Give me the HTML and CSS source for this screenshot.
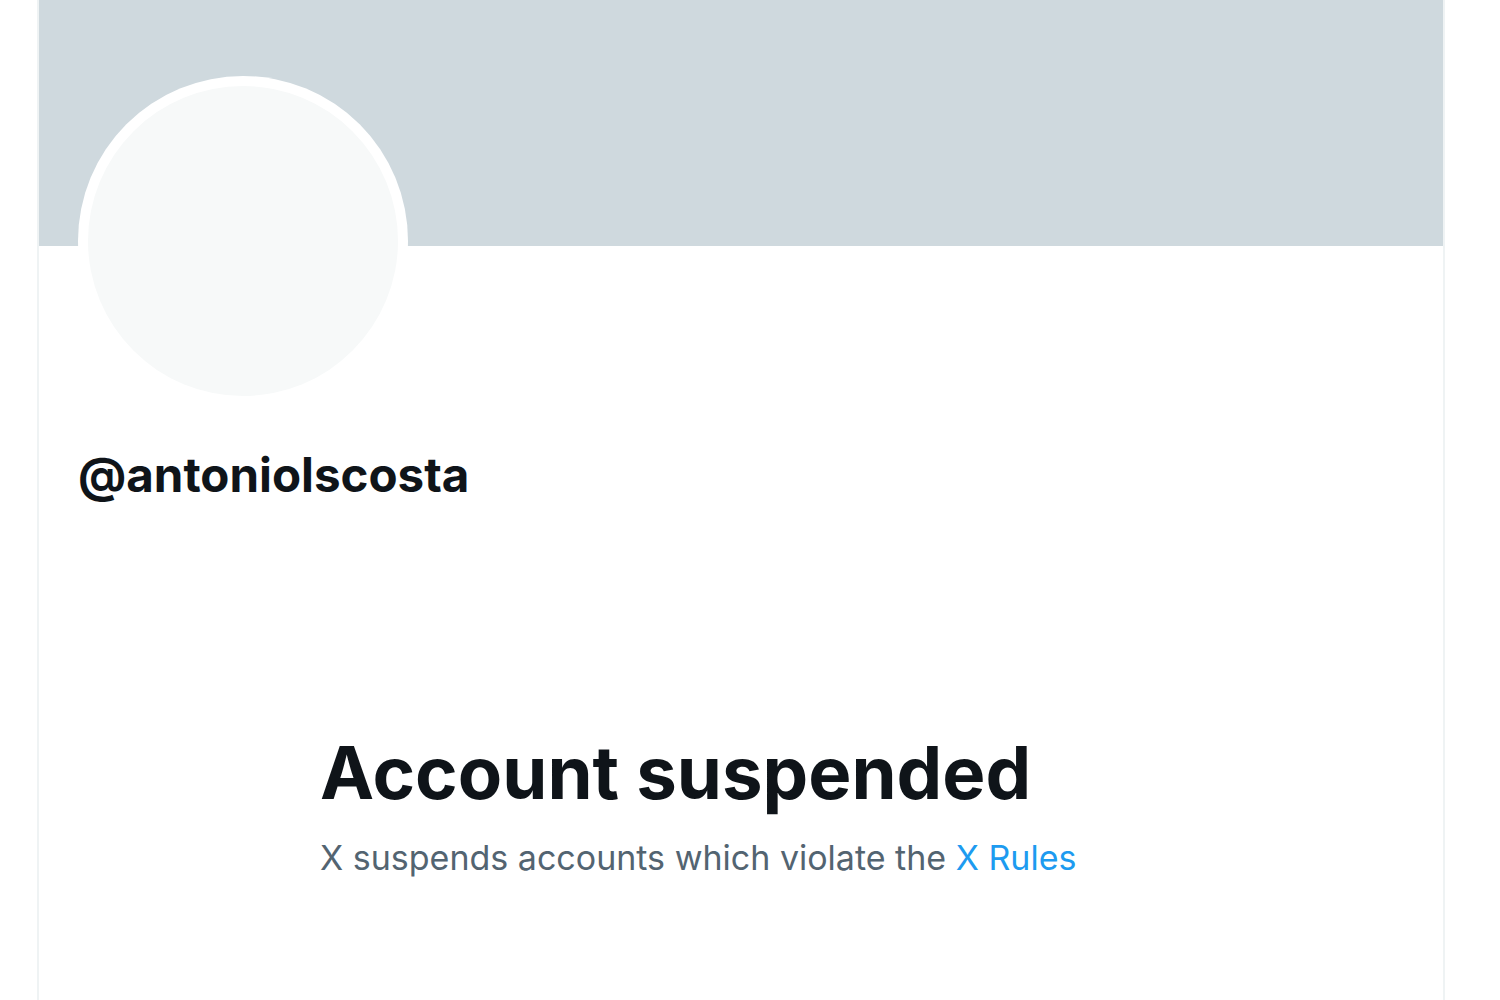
FILE: index.html
```html
<!DOCTYPE html>
<html>
    <head>
        <meta charset="utf-8" />
        <link rel="stylesheet" href="styles.css">
    </head>

    <body>
        <div class="column">
            <div class="banner"></div>

            <div class="profile">
                <div class="avatar">
                    <div class="avatar-inner"></div>
                </div>
                <div class="handle">@antoniolscosta</div>
            </div>

            <div class="empty-state">
                <h1 class="empty-title">Account suspended</h1>
                <p class="empty-text">
                    X suspends accounts which violate the <a href="#" class="rules-link">X Rules</a>
                </p>
            </div>
        </div>
    </body>
</html>
```
FILE: styles.css
```css
body {
    margin: 0;
    background: #fff;
    font-family: Inter, "Noto Sans", sans-serif;
    color: #0f1419;
}

.column {
    margin-left: 37px;
    width: 1404px;
    min-height: 1000px;
    border-left: 2px solid #eff3f4;
    border-right: 2px solid #eff3f4;
}

.banner {
    height: 246px;
    background: #cfd9de;
}

.profile {
    padding-left: 39px;
}

.avatar {
    width: 310px;
    height: 310px;
    margin-top: -170px;
    padding: 10px;
    border-radius: 50%;
    background: #fff;
}

.avatar-inner {
    width: 100%;
    height: 100%;
    border-radius: 50%;
    background: #f7f9f9;
}

.handle {
    margin-top: 39px;
    font-size: 47.5px;
    line-height: 60px;
    font-weight: 700;
}

.empty-state {
    padding: 224px 0 0 281px;
}

.empty-title {
    margin: 0;
    font-size: 72.5px;
    line-height: 88px;
    font-weight: 700;
}

.empty-text {
    margin: 19px 0 0;
    font-size: 34px;
    line-height: 44px;
    color: #536471;
}

.rules-link {
    color: #1d9bf0;
    text-decoration: none;
}
```
